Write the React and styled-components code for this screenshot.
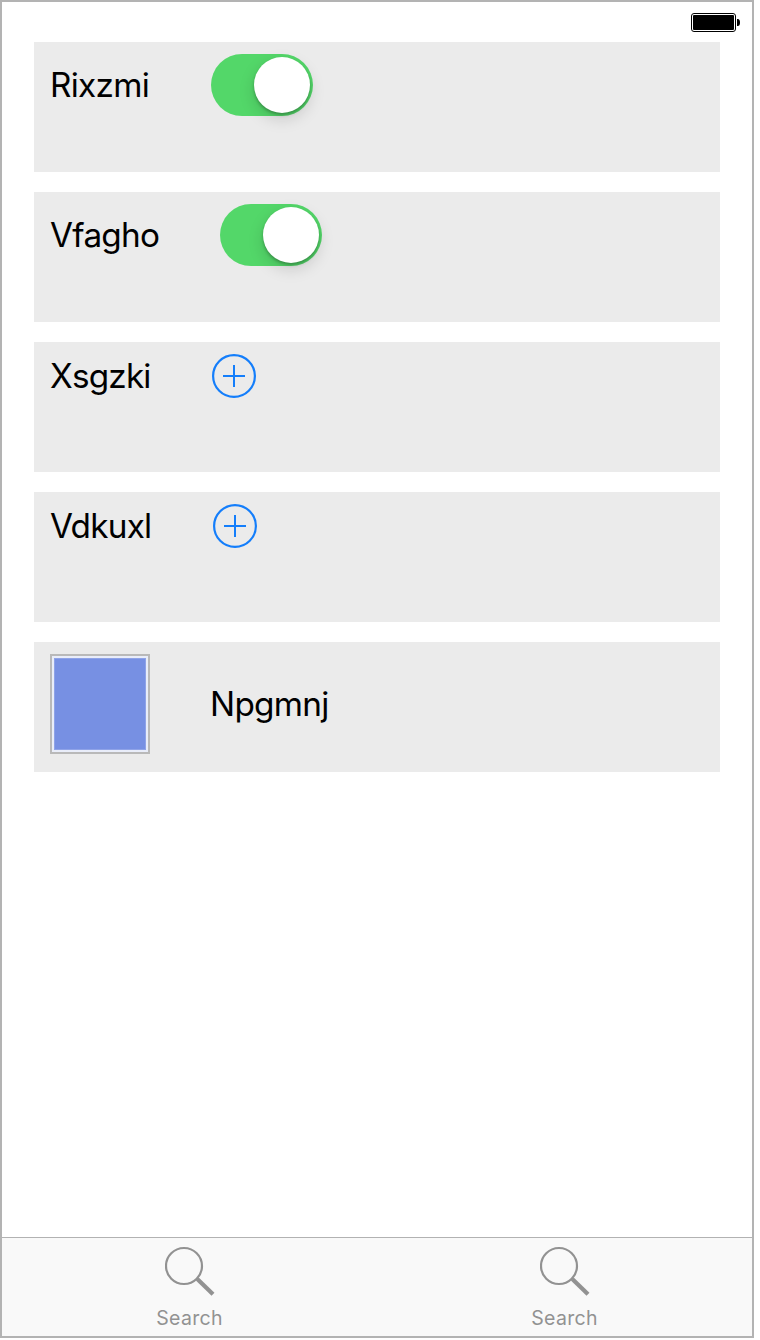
import React from "react";
import styled, { createGlobalStyle } from "styled-components";

const GlobalStyle = createGlobalStyle`
  *, *::before, *::after { box-sizing: border-box; }
  body {
    margin: 0;
    background: #fff;
    font-family: Inter, "Liberation Sans", sans-serif;
  }
`;

const Screen = styled.div`
  width: 754px;
  height: 1338px;
  display: flex;
  flex-direction: column;
  border: 2px solid #b3b3b3;
  background: #fff;
`;

const StatusBar = styled.header`
  height: 40px;
  flex: none;
  display: flex;
  justify-content: flex-end;
  align-items: flex-start;
  padding: 11px 12px 0 0;
`;

const Content = styled.main`
  flex: 1;
  display: flex;
  flex-direction: column;
  gap: 20px;
  padding: 0 32px;
`;

const Row = styled.section`
  height: 130px;
  display: flex;
  align-items: flex-start;
  padding: 12px 16px;
  background: #ebebeb;
`;

const RowLine = styled.div`
  display: flex;
  align-items: center;
  gap: 60px;
`;

const Label = styled.span`
  width: ${(p) => p.$width}px;
  font-size: 33.3px;
  line-height: 40px;
  letter-spacing: ${(p) => p.$tracking}px;
  white-space: nowrap;
  color: #000;
`;

const Toggle = styled.button`
  width: 102px;
  height: 62px;
  display: flex;
  justify-content: flex-end;
  padding: 3px;
  border: 0;
  border-radius: 31px;
  background: #53d769;
`;

const Knob = styled.span`
  width: 56px;
  height: 56px;
  border-radius: 50%;
  background: #fff;
  box-shadow: 0 6px 16px rgba(0, 0, 0, 0.15), 0 2px 3px rgba(0, 0, 0, 0.25);
`;

const AddButton = styled.button`
  width: 44px;
  height: 44px;
  display: flex;
  padding: 0;
  border: 0;
  background: none;
  color: #147efb;
`;

const Swatch = styled.div`
  width: 100px;
  height: 100px;
  padding: 2px;
  border: 2px solid #b9b9b9;
  background: #e9edf9;
`;

const SwatchFill = styled.div`
  height: 100%;
  border: 1px solid #8fa3e8;
  background: #7790e3;
`;

const TabBar = styled.nav`
  height: 99px;
  flex: none;
  display: flex;
  border-top: 1px solid #b2b2b2;
  background: #f9f9f9;
`;

const Tab = styled.a`
  flex: 1;
  display: flex;
  flex-direction: column;
  align-items: center;
  padding-top: 8px;
  color: #929292;
`;

const TabLabel = styled.span`
  margin-top: 10px;
  font-size: 19.5px;
  line-height: 24px;
  letter-spacing: 0.3px;
`;

const BatteryIcon = () => (
  <svg width="49" height="19" viewBox="0 0 49 19">
    <rect x="0.5" y="0.5" width="44" height="18" rx="2.5" fill="#fff" stroke="#000" />
    <rect x="2" y="2" width="41" height="15" rx="1" fill="#000" />
    <path d="M46 6h.8A2.2 3.5 0 0 1 46.8 13H46z" fill="#000" />
  </svg>
);

const PlusIcon = () => (
  <svg width="44" height="44" viewBox="0 0 44 44" fill="none" stroke="currentColor" strokeWidth="2">
    <circle cx="22" cy="22" r="20.9" strokeWidth="2.2" />
    <path d="M11 22h22M22 11v22" />
  </svg>
);

const SearchIcon = () => (
  <svg width="50" height="50" viewBox="0 0 50 50" fill="none" stroke="currentColor">
    <circle cx="19" cy="20" r="18" strokeWidth="2.2" />
    <path d="M32.3 33L48 48.3" strokeWidth="4.2" />
  </svg>
);

const rows = [
  { text: "Rixzmi", width: 101, tracking: -0.7, kind: "toggle" },
  { text: "Vfagho", width: 110, tracking: -0.7, kind: "toggle" },
  { text: "Xsgzki", width: 102, tracking: -0.8, kind: "add" },
  { text: "Vdkuxl", width: 103, tracking: -0.75, kind: "add" },
];

export default function App() {
  return (
    <>
      <GlobalStyle />
      <Screen>
        <StatusBar>
          <BatteryIcon />
        </StatusBar>
        <Content>
          {rows.map((row) => (
            <Row key={row.text}>
              <RowLine>
                <Label $width={row.width} $tracking={row.tracking}>{row.text}</Label>
                {row.kind === "toggle" ? (
                  <Toggle aria-label={row.text}><Knob /></Toggle>
                ) : (
                  <AddButton aria-label={row.text}><PlusIcon /></AddButton>
                )}
              </RowLine>
            </Row>
          ))}
          <Row>
            <RowLine>
              <Swatch><SwatchFill /></Swatch>
              <Label $width={120} $tracking={-0.7}>Npgmnj</Label>
            </RowLine>
          </Row>
        </Content>
        <TabBar>
          {["first", "second"].map((id) => (
            <Tab key={id}>
              <SearchIcon />
              <TabLabel>Search</TabLabel>
            </Tab>
          ))}
        </TabBar>
      </Screen>
    </>
  );
}
